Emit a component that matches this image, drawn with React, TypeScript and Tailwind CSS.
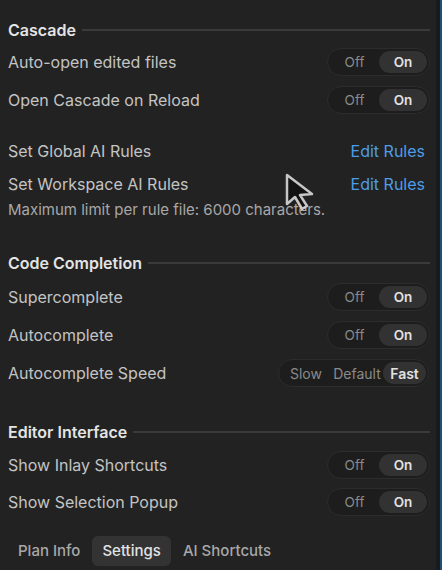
import React from 'react';

const font = { fontFamily: 'Inter, "Noto Sans", sans-serif' };

function SectionHeader({ title }: { title: string }) {
  return (
    <div className="flex items-center h-5 gap-1.5">
      <span className="text-[16px] font-semibold text-[#e4e4e4] whitespace-nowrap">{title}</span>
      <div className="flex-1 h-[2px] bg-[#3a3a3a]" />
    </div>
  );
}

function OnOff() {
  return (
    <div className="flex items-center h-7 w-[103px] rounded-full bg-[#1d1d1d] border border-[#2c2c2c] p-[2px] text-[13.5px]">
      <div className="flex-1 text-center text-[#8a8a8a]">Off</div>
      <div className="w-[48px] h-full rounded-full bg-[#323232] flex items-center justify-center font-semibold text-[#e2e2e2]">
        On
      </div>
    </div>
  );
}

function ToggleRow({ label }: { label: string }) {
  return (
    <div className="flex items-center justify-between h-7">
      <span className="text-[16px] text-[#c4c4c4]">{label}</span>
      <OnOff />
    </div>
  );
}

function SpeedRow() {
  return (
    <div className="flex items-center justify-between h-7 pr-[1px]">
      <span className="text-[16px] text-[#c4c4c4]">Autocomplete Speed</span>
      <div className="flex items-center h-7 w-[151px] rounded-full bg-[#1d1d1d] border border-[#2c2c2c] p-[2px] text-[14px]">
        <div className="w-[50px] text-center text-[#8a8a8a]">Slow</div>
        <div className="w-[52px] text-center text-[#8a8a8a]">Default</div>
        <div className="flex-1 h-full rounded-full bg-[#323232] flex items-center justify-center font-semibold text-[#e2e2e2]">
          Fast
        </div>
      </div>
    </div>
  );
}

function RulesRow({ label }: { label: string }) {
  return (
    <div className="flex items-center justify-between h-5 pr-[5px]">
      <span className="text-[16px] text-[#c4c4c4]">{label}</span>
      <span className="text-[16px] text-[#4d9de6]">Edit Rules</span>
    </div>
  );
}

export default function App() {
  return (
    <div className="relative w-[442px] h-[570px] bg-[#222222] flex overflow-hidden" style={font}>
      <div className="flex-1 flex flex-col pl-2 pr-[6px] pt-5">
        <SectionHeader title="Cascade" />
        <div className="flex flex-col gap-[10px] mt-2">
          <ToggleRow label="Auto-open edited files" />
          <ToggleRow label="Open Cascade on Reload" />
        </div>

        <div className="mt-[27px]">
          <RulesRow label="Set Global AI Rules" />
        </div>
        <div className="mt-[13px]">
          <RulesRow label="Set Workspace AI Rules" />
        </div>
        <div className="mt-[6px] text-[15px] text-[#a8a8a8] leading-5">
          Maximum limit per rule file: 6000 characters.
        </div>

        <div className="mt-[33px]">
          <SectionHeader title="Code Completion" />
        </div>
        <div className="flex flex-col gap-[10px] mt-[10px]">
          <ToggleRow label="Supercomplete" />
          <ToggleRow label="Autocomplete" />
          <SpeedRow />
        </div>

        <div className="mt-[35px]">
          <SectionHeader title="Editor Interface" />
        </div>
        <div className="flex flex-col gap-[9px] mt-[9px]">
          <ToggleRow label="Show Inlay Shortcuts" />
          <ToggleRow label="Show Selection Popup" />
        </div>

        <div className="flex items-center gap-3 mt-5 pl-[10px] text-[15px] font-medium">
          <span className="text-[#a8a8a8]">Plan Info</span>
          <span className="bg-[#333333] text-[#e2e2e2] rounded-md px-[10px] h-[30px] flex items-center">Settings</span>
          <span className="text-[#a8a8a8]">AI Shortcuts</span>
        </div>
      </div>

      <div className="w-[4px] bg-[#1a1a1a]" />
      <div className="w-[2px] bg-[#1f4e78]" />

      <svg
        className="absolute left-[283px] top-[172px]"
        width="34"
        height="40"
        viewBox="0 0 34 40"
      >
        <path d="M4 3 L4 32 L12 25 L19 37 L24 34 L17 23 L29 22 Z" fill="#111" stroke="#d8d8d8" strokeWidth="2.5" strokeLinejoin="round" opacity="0.9" />
      </svg>
    </div>
  );
}
